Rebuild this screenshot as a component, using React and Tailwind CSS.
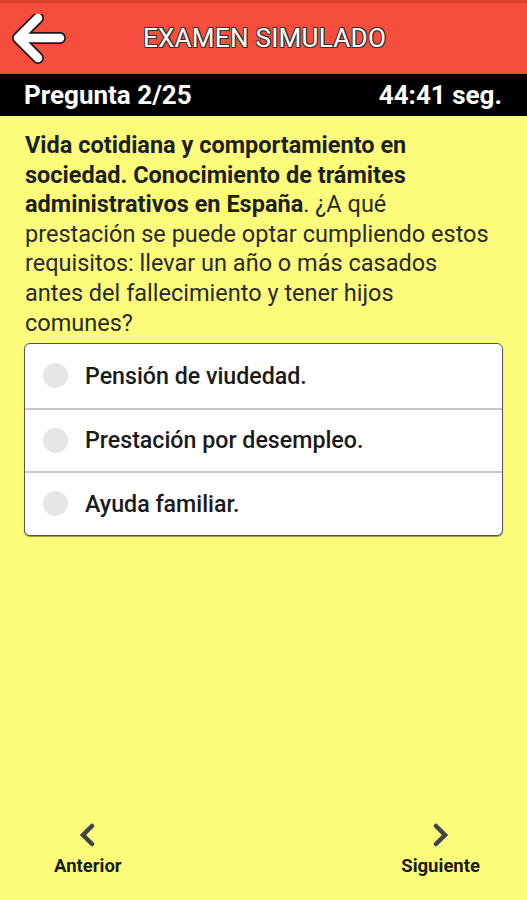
import React from "react";

function BackArrow() {
  return (
    <svg width="56" height="56" viewBox="0 0 56 56" className="block">
      <g fill="none" strokeLinecap="round" strokeLinejoin="round">
        <path d="M6 24 L26 4 M6 24 L26 44 M6 24 L48 24" stroke="#1a1a1a" strokeWidth="12" />
        <path d="M6 24 L26 4 M6 24 L26 44 M6 24 L48 24" stroke="#ffffff" strokeWidth="8.5" />
      </g>
    </svg>
  );
}

function Chevron({ dir }) {
  const d = dir === "left" ? "M14 3 L5 12 L14 21" : "M5 3 L14 12 L5 21";
  return (
    <svg width="19" height="24" viewBox="0 0 19 24" className="block">
      <path d={d} fill="none" stroke="#45434a" strokeWidth="4.5" strokeLinecap="round" strokeLinejoin="miter" />
    </svg>
  );
}

const options = ["Pensión de viudedad.", "Prestación por desempleo.", "Ayuda familiar."];

export default function App() {
  return (
    <div className="w-[527px] h-[900px] bg-[#fefd7b] flex flex-col font-['Roboto',sans-serif] overflow-hidden">
      <div className="h-[3px] bg-[#d84030]" />
      <div className="h-[71px] bg-[#f64d3c] flex items-center relative">
        <div className="absolute left-[12px] top-[11px]">
          <BackArrow />
        </div>
        <div className="flex-1 text-center text-white text-[26px] tracking-[0.3px] pl-[2px] [text-shadow:-1px_-1px_0_#333,1px_-1px_0_#333,-1px_1px_0_#333,1px_1px_0_#333]">
          EXAMEN SIMULADO
        </div>
      </div>
      <div className="h-[42px] bg-black flex items-center justify-between pl-[24px] pr-[25px] text-white font-bold text-[26px]">
        <span>Pregunta 2/25</span>
        <span>44:41 seg.</span>
      </div>
      <div className="pl-[25px] pr-[33px] pt-[15px] text-[23.5px] leading-[29.6px] text-[#1f1f1f]">
        <span className="font-bold">Vida cotidiana y comportamiento en sociedad. Conocimiento de trámites administrativos en España</span>
        <span className="text-[#2a2a2a]">. ¿A qué prestación se puede optar cumpliendo estos requisitos: llevar un año o más casados antes del fallecimiento y tener hijos comunes?</span>
      </div>
      <div className="mx-[24px] mt-[5px] bg-white border border-[#555] rounded-[6px] shadow-[0_1px_1px_rgba(0,0,0,0.4)] overflow-hidden">
        {options.map((o, i) => (
          <div
            key={o}
            className={`h-[63.5px] flex items-center pl-[18px] ${i > 0 ? "border-t-2 border-[#c8c8c8]" : ""}`}
          >
            <div className="w-[25px] h-[25px] rounded-full bg-[#e6e6e6]" />
            <span className="ml-[17px] text-[23.2px] font-medium text-[#1a1a1a]">{o}</span>
          </div>
        ))}
      </div>
      <div className="flex-1" />
      <div className="flex justify-between pl-[54px] pr-[47px] pb-[19px]">
        <div className="flex flex-col items-center">
          <Chevron dir="left" />
          <span className="mt-[6px] text-[18.5px] font-bold text-[#1a1a1a]">Anterior</span>
        </div>
        <div className="flex flex-col items-center">
          <Chevron dir="right" />
          <span className="mt-[6px] text-[18.5px] font-bold text-[#1a1a1a]">Siguiente</span>
        </div>
      </div>
    </div>
  );
}
